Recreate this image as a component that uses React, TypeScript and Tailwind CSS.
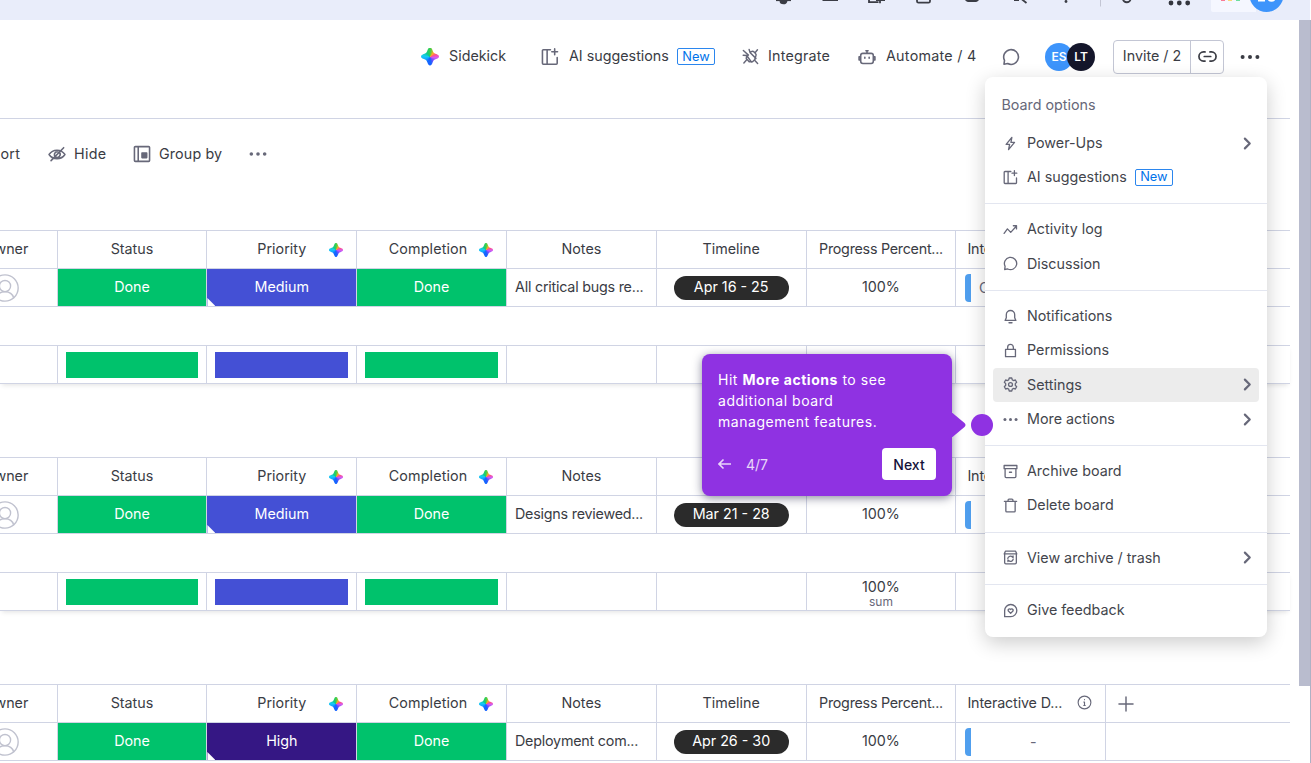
import React from 'react';

type IconProps = { d: React.ReactNode; size: string; sw?: number };

const Icon = ({ d, size, sw = 1.75 }: IconProps) => (
  <svg viewBox="0 0 20 20" className={`${size} shrink-0`} fill="none" stroke="currentColor" strokeWidth={sw} strokeLinecap="round" strokeLinejoin="round">
    {d}
  </svg>
);

const board = <path d="M10.5 2H2.600a1 1 0 0 0-1 1v14a1 1 0 0 0 1 1H17a1 1 0 0 0 1-1v-6.500M6.800 2v16M15.200 1v6.400M12 4.200h6.400" />;
const chat = <path d="M2.200 18l.6-4.200A8.200 8.200 0 1 1 6.300 17.300z" />;
const bolt = <path d="M11.800 1.800L4.200 11.200h4.600l-1.400 7 8-9.600h-4.800z" />;
const activity = <path d="M1.500 15.200l4.400-6 4.400 4.600L18 5.400M13.800 5H18v4.200" />;
const bell = <path d="M10 2a5.600 5.600 0 0 0-5.600 5.600v4L2.800 15.200h14.400l-1.600-3.600v-4A5.600 5.600 0 0 0 10 2zM8 18.300h4" />;
const lock = <path d="M3.400 8.600h13.200v9.600H3.400zM6.200 8.400V5.600a3.800 3.800 0 0 1 7.600 0v2.800" />;
const gear = (
  <>
    <path d="M8.300 1.300h3.400l.7 2.500 1.600.9 2.500-.7 1.700 3-1.800 1.800v2.300l1.800 1.900-1.700 3-2.500-.7-1.600.9-.7 2.500H8.300l-.7-2.500-1.600-.9-2.500.7-1.700-3 1.800-1.900V8.800L1.800 7l1.700-3 2.500.7 1.600-.9z" />
    <circle cx="10" cy="10" r="2.600" />
  </>
);
const dots = (
  <g fill="currentColor" stroke="none">
    <circle cx="2.600" cy="10" r="2" />
    <circle cx="10" cy="10" r="2" />
    <circle cx="17.400" cy="10" r="2" />
  </g>
);
const archive = <path d="M1.500 2h17v4.200h-17zM2.800 6.200v10.600a1.400 1.400 0 0 0 1.400 1.400h11.600a1.400 1.400 0 0 0 1.400-1.400V6.200M8.600 11h2.800" />;
const trash = <path d="M1.800 4.400h16.400M3.800 4.600v12.600a1.200 1.200 0 0 0 1.200 1.200h10a1.200 1.200 0 0 0 1.200-1.200V4.600M6.800 4.200V2.800a1.200 1.200 0 0 1 1.200-1.200h4a1.200 1.200 0 0 1 1.200 1.200v1.400" />;
const restore = (
  <>
    <path d="M3.200 1.600h13.600l1.600 3.600H1.600zM2.200 5.200v11.600a1.600 1.600 0 0 0 1.600 1.600h12.400a1.600 1.600 0 0 0 1.600-1.600V5.200" />
    <path d="M6.400 11.200a3.600 3.600 0 0 1 6.200-1.800l.8.800V8M13.600 12.200a3.600 3.600 0 0 1-6.200 1.800l-.8-.8v2.200" />
  </>
);
const feedback = (
  <>
    <path d="M2.200 18.200V10a8.100 8.100 0 1 1 8.100 8.200z" />
    <path d="M10.200 13.800L6.900 10.400a1.900 1.900 0 0 1 3.300-1.800 1.900 1.900 0 0 1 3.300 1.800z" />
  </>
);
const bot = (
  <path d="M5.400 6h9.200a2.400 2.400 0 0 1 2.400 2.400v6.400a2.400 2.400 0 0 1-2.400 2.400H5.400A2.400 2.400 0 0 1 3 14.800V8.400A2.400 2.400 0 0 1 5.400 6zM10 6V3.200M8.800 3h2.400M3 9.800H1.200v3.600H3M17 9.800h1.800v3.600H17M7.600 10.400v1M12.400 10.400v1" />
);
const plug = (
  <path d="M5.600 8.800l5.600 7.800M9.400 5.200l7 7M9.400 5.200l1.600-1a2.600 2.600 0 0 1 3.200.4l1.700 1.800a2.600 2.600 0 0 1 .3 3.200l-1.200 3.600M5.600 8.800l-.6 3.600 3.400 3.800h4l3-3M1.600 3l6 5.400M1.400 8.600l4.200.2M8.400 1.800l1 3.400M15.600 5.200L18.200 2M5.800 13.600l-3.600 4M14.600 14.200l3.800 4" />
);
const eyeOff = (
  <path d="M1.200 10.600c4-6.400 13.600-6.400 17.600 0-4 6.200-13.600 6.200-17.600 0zM17.400 3L3.400 17.400M12.600 8.200a3.400 3.400 0 0 1-4.800 4.800M7.200 11.600a3.200 3.200 0 0 1 3.600-4" />
);
const groupBy = (
  <>
    <path d="M2.600 1.800h14.800a1 1 0 0 1 1 1v14.400a1 1 0 0 1-1 1H2.600a1 1 0 0 1-1-1V2.800a1 1 0 0 1 1-1zM5.800 2v16" />
    <path d="M10 8.800h5.200v5.200H10z" fill="currentColor" />
  </>
);
const chevron = <path d="M6.500 3.500l6.500 6.500-6.500 6.500" />;

const starShape =
  "bg-[conic-gradient(#35d04a_0deg,#ffb020_38deg,#ff4f8b_68deg,#d45cf0_95deg,#7a4dff_135deg,#1463ff_175deg,#1668ff_205deg,#12a8ff_245deg,#17cdf0_280deg,#0fc98a_320deg,#35d04a_360deg)] [clip-path:path('M9_0C10.500_0_11_1.500_11.800_3.500C12.500_5.200_12.800_5.500_14.500_6.200C16.500_7_18_7.500_18_9C18_10.500_16.500_11_14.500_11.800C12.800_12.500_12.500_12.800_11.800_14.500C11_16.500_10.500_18_9_18C7.500_18_7_16.500_6.200_14.500C5.500_12.800_5.200_12.500_3.500_11.800C1.500_11_0_10.500_0_9C0_7.500_1.500_7_3.500_6.200C5.200_5.500_5.500_5.200_6.200_3.500C7_1.500_7.500_0_9_0Z')]";

const Star = ({ small }: { small?: boolean }) => (
  <span className={`block h-[18px] w-[18px] shrink-0 ${starShape} ${small ? 'scale-[0.78]' : ''}`} />
);

const NewBadge = () => (
  <span className="flex h-[17px] w-[38px] shrink-0 items-center justify-center rounded-[2px] border border-[#2b86ee] pt-px text-[12.800px] leading-none text-[#0073ea]">
    New
  </span>
);

const TopBar = () => (
  <div className="h-5 w-[1310px] shrink-0 bg-[#e9edfa]">
    <svg viewBox="0 0 1310 20" className="h-5 w-[1310px]" fill="none" stroke="#3b3d45" strokeWidth="1.800">
      <path d="M776 .2h15" />
      <path d="M780.500 1a3 2.400 0 0 0 6 0z" fill="#3b3d45" />
      <path d="M822.500 0h15.500M869 -2V2.200h9.500M880 -2v5.200M876 0h9M917 -2v3.200a1.500 1.500 0 0 0 1.500 1.500h10a1.500 1.500 0 0 0 1.500-1.500V-2M966 -1.500a2 2 0 0 0 2 2.500h8a2 2 0 0 0 2-2.500M1014 0h5M1021.500-1l5 4M1123 -1a3.700 3.200 0 0 0 7.500 0" />
      <circle cx="1066" cy="1.500" r="1.400" fill="#3b3d45" stroke="none" />
      <path d="M1100.500 0v6.500" stroke="#c3c6d4" strokeWidth="1" />
      <g fill="#33353d" stroke="none">
        <circle cx="1171" cy="3" r="2.400" />
        <circle cx="1179.300" cy="3" r="2.400" />
        <circle cx="1187.700" cy="3" r="2.400" />
      </g>
      <path d="M1211 0h45v12h-43a2 2 0 0 1-2-2z" fill="#f5f7ff" stroke="none" />
      <path d="M1221 0h4" stroke="#fb6c8b" />
      <path d="M1228 0h4" stroke="#fdd36a" />
      <path d="M1236 0h4" stroke="#5fdc93" />
      <circle cx="1266.500" cy="-5" r="17" fill="#3d94fb" stroke="none" />
      <path d="M1258 .5h7M1268.500 0q3 1.500 6 0" stroke="#fff" strokeWidth="1.800" />
    </svg>
  </div>
);

const Header = () => (
  <div className="flex h-[73px] shrink-0 items-center pl-[421px] text-[14.300px] text-[#3a3c44]">
    <div className="flex w-[120px] items-center gap-[10px]"><Star /><span className="-mt-px">Sidekick</span></div>
    <div className="flex w-[201px] items-center text-[#676879]">
      <Icon d={board} size="size-[18px]" />
      <span className="-mt-px ml-[10px] w-[108px] whitespace-nowrap text-[#3a3c44]">AI suggestions</span>
      <NewBadge />
    </div>
    <div className="flex w-[116px] items-center gap-[9px] text-[#676879]"><Icon d={plug} size="size-[17px]" sw={1.7} /><span className="-mt-px tracking-[0.015em] text-[#3a3c44]">Integrate</span></div>
    <div className="flex w-[144px] items-center gap-[10px] text-[#676879]"><Icon d={bot} size="size-[18px]" /><span className="-mt-px whitespace-nowrap tracking-[0.018em] text-[#3a3c44]">Automate / 4</span></div>
    <div className="flex w-[43px] text-[#676879]"><Icon d={chat} size="size-[18px]" /></div>
    <div className="flex w-[68px] text-[12px] font-semibold text-white">
      <span className="flex size-7 items-center justify-center rounded-full bg-[#3d94fb]">ES</span>
      <span className="-ml-[6px] flex size-7 items-center justify-center rounded-full bg-[#14162b]">LT</span>
    </div>
    <div className="flex h-[34px] w-[111px] rounded-[4px] border border-[#c3c6d4]">
      <span className="flex w-[77px] items-center justify-center border-r border-[#c3c6d4] pb-px whitespace-nowrap">Invite / 2</span>
      <span className="flex flex-1 items-center justify-center">
        <Icon size="size-[19px]" sw={1.800} d={<path d="M7.400 5.200H5.800a4.800 4.800 0 0 0 0 9.600h1.600M12.600 5.200h1.600a4.800 4.800 0 0 1 0 9.600h-1.600M6.600 10h6.800" />} />
      </span>
    </div>
    <div className="ml-4"><Icon d={dots} size="size-5" /></div>
  </div>
);

const FilterBar = () => (
  <div className="flex h-[69px] shrink-0 items-center text-[14.300px] text-[#3a3c44]">
    <div className="flex w-12 justify-start"><span className="-ml-[9px] tracking-[0.02em]">Sort</span></div>
    <div className="flex w-[85px] items-center gap-2 text-[#676879]"><Icon d={eyeOff} size="size-[18px]" /><span className="tracking-[0.02em] text-[#3a3c44]">Hide</span></div>
    <div className="flex w-[116px] items-center gap-2 text-[#676879]"><Icon d={groupBy} size="size-[18px]" /><span className="whitespace-nowrap tracking-[0.01em] text-[#3a3c44]">Group by</span></div>
    <div className="text-[#676879]"><Icon d={dots} size="size-[18px]" /></div>
  </div>
);

const cell = 'flex w-[149.800px] shrink-0 items-center border-l border-[#d0d4e4]';

type GroupData = { priority: string; color: string; note: string; date: string; value: string; summary: boolean; total?: string };

const groups: GroupData[] = [
  { priority: 'Medium', color: 'bg-[#4450d5]', note: 'All critical bugs re...', date: 'Apr 16 - 25', value: 'Ch', summary: true },
  { priority: 'Medium', color: 'bg-[#4450d5]', note: 'Designs reviewed...', date: 'Mar 21 - 28', value: '', summary: true, total: '100%' },
  { priority: 'High', color: 'bg-[#351784]', note: 'Deployment com...', date: 'Apr 26 - 30', value: '-', summary: false },
];

const Group = ({ g }: { g: GroupData }) => (
  <div className="w-[1290px] text-[14.300px] text-[#3a3c44]">
    <div className="flex h-[38px] border-t border-[#d0d4e4]">
      <div className="flex w-[56.600px] shrink-0 items-center pb-[2px]"><span className="-ml-[16.500px]">Owner</span></div>
      <div className={`${cell} justify-center pb-[2px]`}>Status</div>
      <div className={`${cell} relative justify-center pb-[2px]`}>Priority<span className="absolute right-[11px] top-[9.500px]"><Star small /></span></div>
      <div className={`${cell} relative justify-center pb-[2px]`}>
        <span className="-ml-[7px] tracking-[0.01em]">Completion</span><span className="absolute right-[11px] top-[9.500px]"><Star small /></span>
      </div>
      <div className={`${cell} justify-center pb-[2px]`}>Notes</div>
      <div className={`${cell} justify-center pb-[2px]`}>Timeline</div>
      <div className={`${cell} justify-center pb-[2px] tracking-[-0.018em] whitespace-nowrap`}>Progress Percent...</div>
      <div className={`${cell} justify-between pb-[2px] pl-[11px] pr-[13px] whitespace-nowrap`}>
        <span className="tracking-[-0.01em]">Interactive D...</span>
        <span className="text-[#676879]">
          <Icon size="size-[15px]" sw={1.500} d={<><circle cx="10" cy="10" r="8.500" /><path d="M10 9.400v4.600M9 9.400h1M10 6v.3M9 14h2" /></>} />
        </span>
      </div>
      <div className="flex flex-1 items-center border-l border-[#d0d4e4] pl-3 pt-px text-[#676879]">
        <Icon size="size-[16px]" sw={1.800} d={<path d="M10 1.200v17.600M1.200 10h17.600" />} />
      </div>
    </div>
    <div className="flex h-[38px] border-t border-[#d0d4e4]">
      <div className="flex w-[56.600px] shrink-0 items-center">
        <span className="-ml-[9px] text-[#c0c2cf]">
          <Icon size="size-[28px]" sw={1} d={<><circle cx="10" cy="10" r="9.400" /><circle cx="10" cy="8.600" r="4" /><path d="M3.800 17c1.600-5.800 10.800-5.800 12.400 0" /></>} />
        </span>
      </div>
      <div className={`${cell} justify-center bg-[#00c26c] pb-px text-white`}>Done</div>
      <div className={`${cell} ${g.color} relative justify-center pb-px text-white`}>
        {g.priority}
        <span className="absolute bottom-0 left-0 size-[8px] bg-white [clip-path:polygon(0_0,100%_100%,0_100%)]" />
      </div>
      <div className={`${cell} justify-center bg-[#00c26c] pb-px text-white`}>Done</div>
      <div className={`${cell} pb-px pl-2 tracking-[-0.015em] whitespace-nowrap`}>{g.note}</div>
      <div className={`${cell} justify-center`}>
        <span className="mt-px flex h-6 w-[115px] items-center justify-center rounded-full bg-[#2b2b2b] pb-[2px] whitespace-nowrap text-white">{g.date}</span>
      </div>
      <div className={`${cell} justify-center pb-px`}>100%</div>
      <div className={`${cell} pl-[8.500px]`}>
        <span className="h-7 w-[6px] rounded-l-[4px] bg-[#509fee]" />
        <span className={g.value === '-' ? 'ml-[59px] text-[#676879]' : 'ml-2 text-[#676879]'}>{g.value}</span>
      </div>
      <div className="flex-1 border-l border-[#d0d4e4]" />
    </div>
    <div className="h-[39px] border-t border-[#d0d4e4]" />
    {g.summary && (
      <>
        <div className="flex h-[39px] border-y border-[#d0d4e4] shadow-[0_3px_5px_-2px_rgba(0,0,0,0.12)]">
          <div className="w-[56.600px] shrink-0" />
          <div className={`${cell} px-2`}><span className="h-[26px] flex-1 bg-[#00c26c]" /></div>
          <div className={`${cell} px-2`}><span className={`h-[26px] flex-1 ${g.color}`} /></div>
          <div className={`${cell} px-2`}><span className="h-[26px] flex-1 bg-[#00c26c]" /></div>
          <div className={cell} />
          <div className={cell} />
          <div className={`${cell} flex-col justify-center`}>
            {g.total && (
              <>
                <span className="mt-[2px] leading-[18px]">{g.total}</span>
                <span className="text-[12px] leading-[11px] text-[#676879]">sum</span>
              </>
            )}
          </div>
          <div className={cell} />
          <div className="flex-1" />
        </div>
        <div className="h-[73px]" />
      </>
    )}
  </div>
);

type ItemProps = { icon: React.ReactNode; label: string; arrow?: boolean; badge?: boolean; active?: boolean };

const Item = ({ icon, label, arrow, badge, active }: ItemProps) => (
  <div className={`mx-[8.500px] flex h-[34.300px] items-center rounded-[4px] pl-[9.500px] pr-[4px] ${active ? 'bg-[#ececec]' : ''}`}>
    <Icon d={icon} size="size-[15px]" />
    <span className="-mt-px ml-[9.500px] whitespace-nowrap text-[#43454c]">{label}</span>
    {badge && <span className="ml-2"><NewBadge /></span>}
    {arrow && <span className="ml-auto"><Icon d={chevron} size="size-[15px]" sw={2.900} /></span>}
  </div>
);

const Rule = () => <div className="mb-[8.200px] mt-[8.800px] h-px bg-[#e3e6f0]" />;

const Menu = () => (
  <div className="absolute left-[984.500px] top-[77px] h-[560px] w-[282.500px] rounded-[8px] bg-white pt-[8.400px] text-[14.300px] text-[#676879] shadow-[0_6px_20px_rgba(0,0,0,0.2)]">
    <div className="flex h-[40.500px] items-center pb-px pl-[17px]">Board options</div>
    <Item icon={bolt} label="Power-Ups" arrow />
    <Item icon={board} label="AI suggestions" badge />
    <Rule />
    <Item icon={activity} label="Activity log" />
    <Item icon={chat} label="Discussion" />
    <Rule />
    <Item icon={bell} label="Notifications" />
    <Item icon={lock} label="Permissions" />
    <Item icon={gear} label="Settings" arrow active />
    <Item icon={dots} label="More actions" arrow />
    <Rule />
    <Item icon={archive} label="Archive board" />
    <Item icon={trash} label="Delete board" />
    <Rule />
    <Item icon={restore} label="View archive / trash" arrow />
    <Rule />
    <Item icon={feedback} label="Give feedback" />
  </div>
);

const Tip = () => (
  <>
    <div className="absolute left-[702px] top-[354px] h-[142px] w-[250px] rounded-[8px] bg-[#8f32e2] px-4 pt-[15px] text-[14px] leading-[21px] text-white shadow-[0_2px_10px_rgba(20,22,60,0.5)]">
      <p className="tracking-[0.038em] whitespace-nowrap">Hit <b>More actions</b> to see<br />additional board<br />management features.</p>
      <div className="mt-4 flex h-8 items-center">
        <svg viewBox="0 0 14 12" className="h-3 w-[14px] opacity-80" fill="none" stroke="#fff" strokeWidth="1.600"><path d="M13 6H1.500M5.500 1.500L1 6l4.500 4.500" /></svg>
        <span className="ml-[14px] opacity-80">4/7</span>
        <span className="ml-auto flex h-8 w-[54px] items-center justify-center rounded-[4px] bg-white font-medium text-[#14123a]">Next</span>
      </div>
      <svg viewBox="0 0 14 24" className="absolute left-[249px] top-[59px] h-6 w-[15px]"><path d="M0 0h1L13 10q2 2 0 4L1 24H0z" fill="#8f32e2" /></svg>
    </div>
    <div className="absolute left-[971px] top-[414px] size-[22px] rounded-full bg-[#8f32e2]" />
  </>
);

export default function App() {
  return (
    <div className="relative flex h-[763px] w-[1311px] flex-col overflow-hidden bg-white font-[Inter,sans-serif]">
      <TopBar />
      <div className="flex min-h-0 flex-1">
        <div className="flex w-[1299px] shrink-0 flex-col">
          <Header />
          <div className="h-[26px] w-[1290px] shrink-0 border-b border-[#d0d4e4]" />
          <FilterBar />
          <div className="h-[42px] shrink-0" />
          {groups.map((g) => <Group key={g.date} g={g} />)}
        </div>
        <div className="flex-1 border-r border-[#aeb1c4]">
          <div className="h-[666px] bg-[#b9bcce]" />
        </div>
      </div>
      <Menu />
      <Tip />
    </div>
  );
}
